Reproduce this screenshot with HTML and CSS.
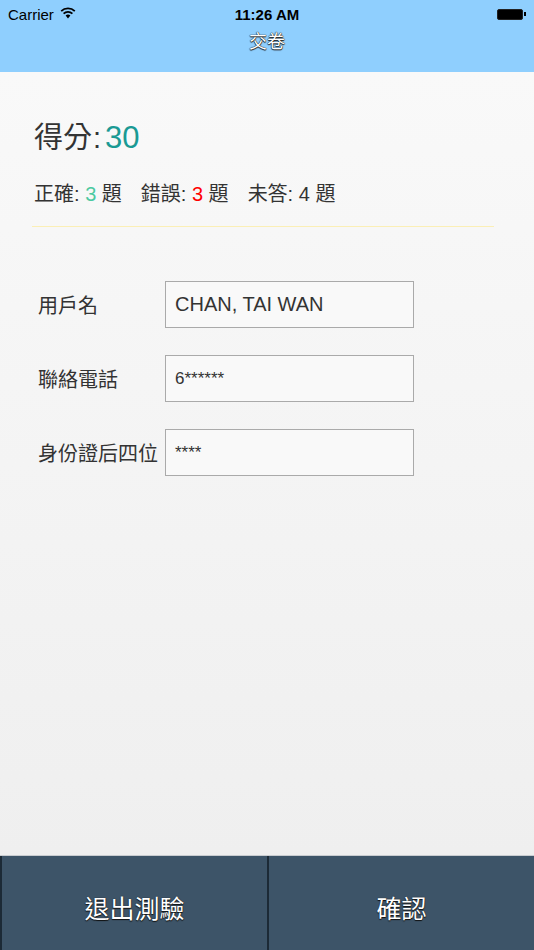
FILE: index.html
```html
<!DOCTYPE html>
<html lang="zh-Hant">
<head>
<meta charset="utf-8">
<link rel="stylesheet" href="styles.css">
</head>
<body>
<div class="app">
  <header class="topbar">
    <div class="status">
      <div class="status-left">Carrier
        <svg class="wifi" width="16" height="12" viewBox="0 0 16 12">
          <path d="M8 11.5 L5.6 8.6 A3.6 3.6 0 0 1 10.4 8.6 Z" fill="#000"/>
          <path d="M3.6 6.6 A6.4 6.4 0 0 1 12.4 6.6" stroke="#000" stroke-width="1.8" fill="none"/>
          <path d="M1.2 4.1 A9.8 9.8 0 0 1 14.8 4.1" stroke="#000" stroke-width="1.8" fill="none"/>
        </svg>
      </div>
      <div class="status-time">11:26 AM</div>
      <div class="status-right">
        <span class="battery"><span class="battery-fill"></span></span><span class="battery-tip"></span>
      </div>
    </div>
    <div class="title">交卷</div>
  </header>

  <main class="content">
    <div class="score">得分<span class="colon">:</span><span class="score-num">30</span></div>
    <div class="stats">
      <span class="stat">正確: <span class="green">3</span> 題</span>
      <span class="stat">錯誤: <span class="red">3</span> 題</span>
      <span class="stat">未答: 4 題</span>
    </div>
    <div class="divider"></div>

    <form class="form">
      <div class="row">
        <label class="label">用戶名</label>
        <div class="input input-name">CHAN, TAI WAN</div>
      </div>
      <div class="row">
        <label class="label">聯絡電話</label>
        <div class="input input-small">6******</div>
      </div>
      <div class="row">
        <label class="label">身份證后四位</label>
        <div class="input input-small">****</div>
      </div>
    </form>
  </main>

  <footer class="bottombar">
    <button class="btn btn-left" type="button">退出測驗</button>
    <button class="btn btn-right" type="button">確認</button>
  </footer>
</div>
</body>
</html>
```

FILE: styles.css
```css
html, body {
  margin: 0;
  padding: 0;
}
body {
  width: 534px;
  height: 950px;
  overflow: hidden;
  font-family: "Liberation Sans", "Noto Sans CJK TC", sans-serif;
  color: #333;
}
.app {
  display: flex;
  flex-direction: column;
  height: 950px;
}
.topbar {
  background: #8fcffe;
  height: 72px;
  flex: none;
  display: flex;
  flex-direction: column;
}
.status {
  height: 28px;
  display: flex;
  align-items: center;
  justify-content: space-between;
  padding: 0 8px;
  font-size: 15px;
  color: #000;
}
.status-left {
  display: flex;
  align-items: center;
  gap: 6px;
  width: 120px;
}
.wifi {
  margin-top: -2px;
}
.status-time {
  font-weight: bold;
  font-size: 15px;
}
.status-right {
  width: 120px;
  display: flex;
  justify-content: flex-end;
  align-items: center;
}
.battery {
  width: 26px;
  height: 11px;
  border: 1px solid #222;
  border-radius: 2px;
  background: #000;
  box-sizing: border-box;
  display: inline-block;
}
.battery-tip {
  width: 2px;
  height: 4px;
  background: #000;
  display: inline-block;
  margin-left: 1px;
}
.title {
  text-align: center;
  color: #fff;
  font-size: 18px;
  line-height: 28px;
  text-shadow: 0 0 1px #111, 0 1px 1px #222, 0 0 1px #111;
}
.content {
  flex: 1;
  background: linear-gradient(#f9f9f9, #efefef);
  padding: 0 32px;
  box-sizing: border-box;
}
.score {
  margin-top: 46px;
  font-size: 29px;
  line-height: 40px;
  color: #333;
  padding-left: 2px;
}
.colon {
  margin: 0 4px 0 1px;
}
.score-num {
  color: #1a9a94;
  font-size: 31px;
}
.stats {
  margin-top: 23px;
  font-size: 20px;
  line-height: 26px;
  color: #333;
  display: flex;
  gap: 19px;
  padding-left: 2px;
}
.green { color: #4cc9a0; }
.red { color: #ff0000; }
.divider {
  margin-top: 19px;
  height: 1px;
  background: #fbefb6;
  width: 462px;
}
.form {
  margin-top: 54px;
  display: flex;
  flex-direction: column;
  gap: 27px;
}
.row {
  display: flex;
  align-items: center;
  height: 47px;
}
.label {
  width: 133px;
  padding-left: 6px;
  box-sizing: border-box;
  font-size: 20px;
  color: #333;
  white-space: nowrap;
}
.input {
  width: 249px;
  height: 47px;
  box-sizing: border-box;
  border: 1.5px solid #aaa;
  background: #f9f9f9;
  padding-left: 9px;
  display: flex;
  align-items: center;
  color: #333;
}
.input-name {
  font-size: 20px;
}
.input-small {
  font-size: 17px;
}
.bottombar {
  height: 94px;
  flex: none;
  display: flex;
  border-top: 1px solid #c9ccd0;
  background: #222;
}
.btn {
  flex: 1;
  border: none;
  margin: 0;
  background: #3d5468;
  color: #fff;
  font-family: "Liberation Sans", "Noto Sans CJK TC", sans-serif;
  font-size: 25px;
  padding: 8px 0 0;
  text-shadow: 0 0 1px #111, 0 1px 1px #111;
}
.btn-left {
  border-left: 2px solid #1c2a36;
}
.btn-right {
  border-left: 2px solid #1c2a36;
}
```
